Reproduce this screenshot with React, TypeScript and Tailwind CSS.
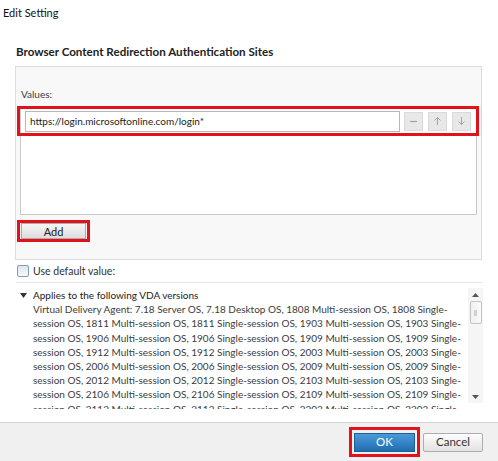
import React from 'react';

const versionLines = [
    'Virtual Delivery Agent: 7.18 Server OS, 7.18 Desktop OS, 1808 Multi-session OS, 1808 Single-',
    'session OS, 1811 Multi-session OS, 1811 Single-session OS, 1903 Multi-session OS, 1903 Single-',
    'session OS, 1906 Multi-session OS, 1906 Single-session OS, 1909 Multi-session OS, 1909 Single-',
    'session OS, 1912 Multi-session OS, 1912 Single-session OS, 2003 Multi-session OS, 2003 Single-',
    'session OS, 2006 Multi-session OS, 2006 Single-session OS, 2009 Multi-session OS, 2009 Single-',
    'session OS, 2012 Multi-session OS, 2012 Single-session OS, 2103 Multi-session OS, 2103 Single-',
    'session OS, 2106 Multi-session OS, 2106 Single-session OS, 2109 Multi-session OS, 2109 Single-',
    'session OS, 2112 Multi-session OS, 2112 Single-session OS, 2203 Multi-session OS, 2203 Single-',
];

const SmallButton: React.FC<{ children: React.ReactNode }> = ({ children }) => (
    <div className="w-[19px] h-[19px] flex items-center justify-center border border-[#dadada] bg-[#e8e8e8]">
        {children}
    </div>
);

export default function App() {
    return (
        <div className="w-[498px] h-[461px] bg-white flex flex-col overflow-hidden text-[#3c3c3c] font-['Lato',sans-serif] text-[10px]">
            <div className="h-[27px] shrink-0 pl-[3px] pt-[6px] leading-[14px] text-[11px] text-[#111]">Edit Setting</div>

            <div className="mt-[17px] ml-[16px] leading-[16px] text-[11.6px] font-bold text-[#222]">
                Browser Content Redirection Authentication Sites
            </div>

            {/* values panel */}
            <div className="mt-[6px] ml-[15px] w-[467px] h-[194px] shrink-0 border border-[#dcdcdc] bg-[#f8f8f8] flex flex-col">
                <div className="mt-[20px] ml-[5px] leading-[14px]">Values:</div>

                <div className="mt-[7px] ml-[4px] w-[457px] h-[107px] border border-[#c9c9c9] bg-white flex flex-col">
                    <div className="-mt-[3px] -ml-[4px] -mr-[3px] h-[30px] border-[3px] border-[#e1121b] flex items-center pl-[5px]">
                        <div className="w-[375px] h-[21px] border border-[#b8b8b8] bg-white pl-[4px] flex items-center text-[#222] whitespace-nowrap">
                            https://login.microsoftonline.com/login*
                        </div>
                        <div className="ml-[4px] flex gap-[5px]">
                            <SmallButton>
                                <svg width="9" height="9" viewBox="0 0 9 9"><path d="M1 4.5h7" stroke="#a3a3a3" strokeWidth="1.2" /></svg>
                            </SmallButton>
                            <SmallButton>
                                <svg width="9" height="10" viewBox="0 0 9 10" fill="none" stroke="#a3a3a3" strokeWidth="1"><path d="M4.5 9V1.5M1.5 4.5l3-3 3 3" /></svg>
                            </SmallButton>
                            <SmallButton>
                                <svg width="9" height="10" viewBox="0 0 9 10" fill="none" stroke="#a3a3a3" strokeWidth="1"><path d="M4.5 1v7.5M1.5 5.5l3 3 3-3" /></svg>
                            </SmallButton>
                        </div>
                    </div>
                </div>

                <div className="mt-[5px] ml-[1px] w-[73px] h-[22px] border-[3px] border-[#e1121b] flex">
                    <div className="flex-1 mx-[1px] flex items-center justify-center border border-[#acacac] bg-gradient-to-b from-[#f6f6f6] to-[#dddddd] text-[#222] text-[11px] leading-none">
                        Add
                    </div>
                </div>
            </div>

            {/* default value */}
            <div className="mt-[5px] ml-[17px] h-[12px] flex items-center gap-[4px]">
                <div className="w-[12px] h-[12px] rounded-[2px] border border-[#7f9db9] bg-gradient-to-b from-[#dfe6ee] to-[#f6f8fa]" />
                <span className="leading-[12px] text-[10.5px] text-[#333]">Use default value:</span>
            </div>

            <div className="mt-[5px] ml-[16px] w-[467px] h-px shrink-0 bg-[#e6e6e6]" />

            {/* versions */}
            <div className="mt-[5px] ml-[16px] w-[467px] h-[121px] shrink-0 flex items-start overflow-hidden">
                <div className="flex-1 h-[121px] flex overflow-hidden">
                    <div className="w-[17px] shrink-0 pl-[4px] h-[14px] flex items-center">
                        <svg width="7" height="5" viewBox="0 0 7 5"><path d="M0 0h7L3.5 5z" fill="#333" /></svg>
                    </div>
                    <div className="flex-1 leading-[14.2px] whitespace-nowrap overflow-hidden">
                        <div className="text-[#222]">Applies to the following VDA versions</div>
                        {versionLines.map((l, i) => (
                            <div key={i}>{l}</div>
                        ))}
                    </div>
                </div>
                <div className="w-[15px] h-[115px] shrink-0 bg-[#f5f5f5] flex flex-col items-center">
                    <div className="h-[13px] flex items-center">
                        <svg width="7" height="4" viewBox="0 0 7 4"><path d="M0 4h7L3.5 0z" fill="#555" /></svg>
                    </div>
                    <div className="w-[12px] h-[23px] border border-[#c3c3c3] bg-gradient-to-r from-[#f0f0f0] to-[#fafafa] rounded-[2px] flex items-center justify-center">
                        <svg width="3" height="6" viewBox="0 0 3 6"><path d="M0 1h3M0 3h3M0 5h3" stroke="#999" strokeWidth="0.8" /></svg>
                    </div>
                    <div className="flex-1" />
                    <div className="h-[13px] flex items-center">
                        <svg width="7" height="4" viewBox="0 0 7 4"><path d="M0 0h7L3.5 4z" fill="#555" /></svg>
                    </div>
                </div>
            </div>

            <div className="flex-1" />

            {/* footer */}
            <div className="h-[39px] shrink-0 border-t border-[#d5d5d5] bg-[#f0f0f0] flex items-center justify-end pr-[15px] gap-[3px]">
                <div className="w-[71px] h-[30px] border-[3px] border-[#e1121b] flex items-center justify-center">
                    <div className="w-[61px] h-[19px] border border-[#1d5e96] bg-gradient-to-b from-[#4a9ad8] to-[#1f6eb0] text-white flex items-center justify-center text-[11.5px] leading-none">
                        OK
                    </div>
                </div>
                <div className="w-[60px] h-[19px] border border-[#adadad] rounded-[2px] bg-gradient-to-b from-[#fdfdfd] to-[#e3e3e3] text-[#333] flex items-center justify-center text-[11.5px] leading-none">
                    Cancel
                </div>
            </div>
        </div>
    );
}
